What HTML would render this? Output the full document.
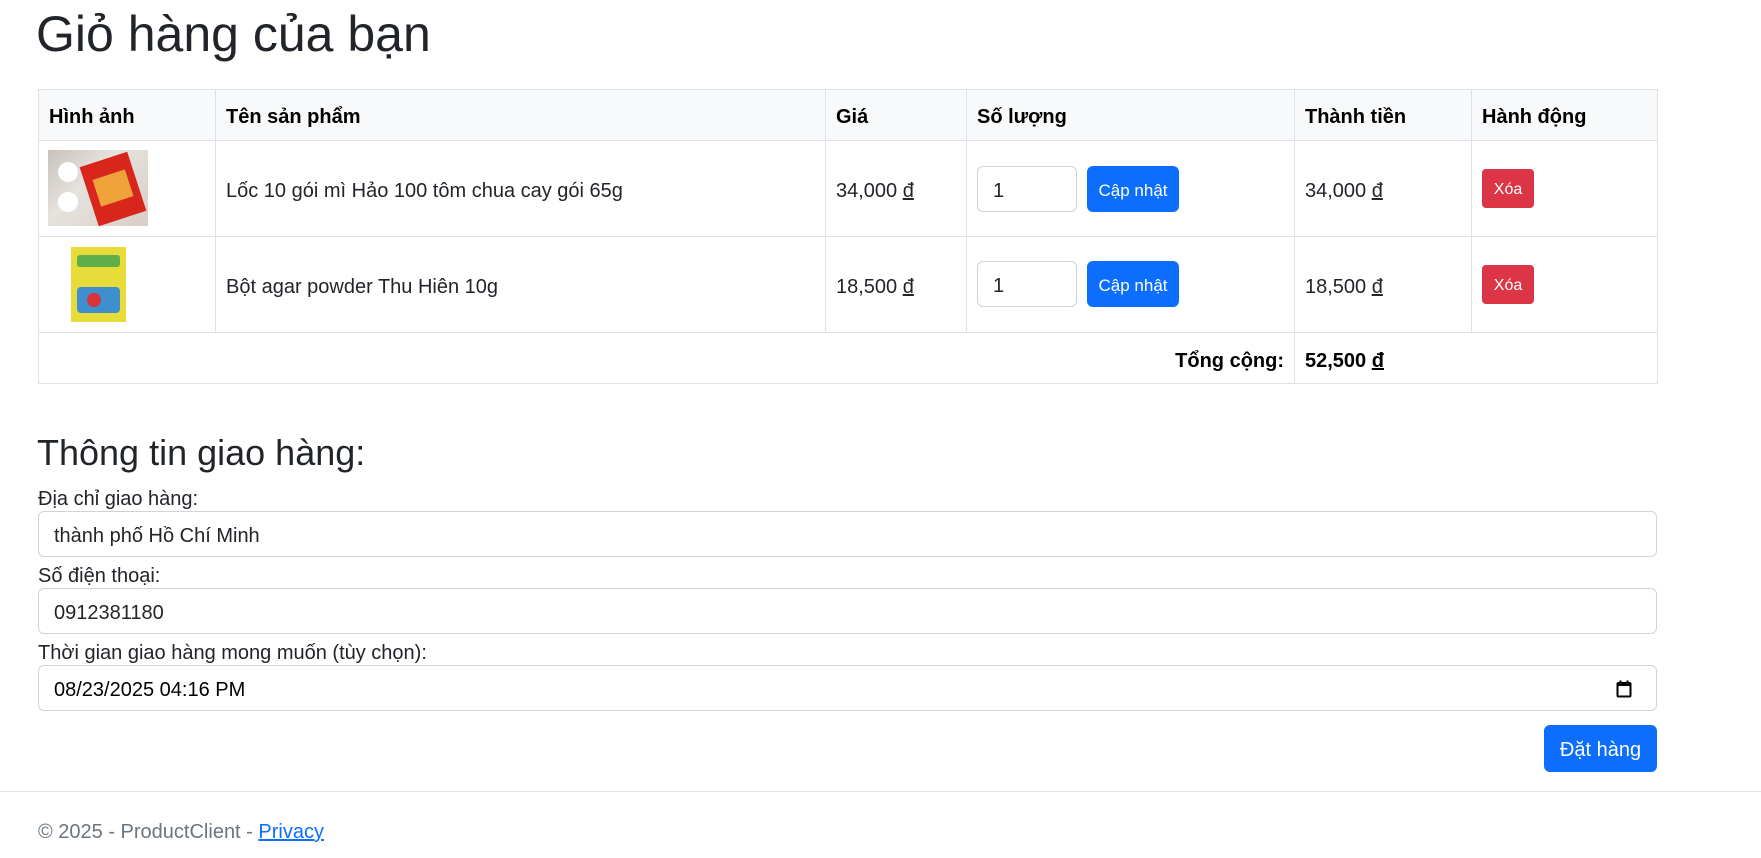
<!DOCTYPE html>
<html><head><meta charset="utf-8"><style>
*{box-sizing:border-box;margin:0;padding:0}
body{width:1761px;height:858px;position:relative;background:#fff;font-family:"Liberation Sans",sans-serif;color:#212529;font-size:20px;overflow:hidden}
.a{position:absolute}
.h{font-weight:bold;color:#000}
.ln{position:absolute;background:#dee2e6}
.inp{position:absolute;border:1px solid #ced4da;border-radius:6px;background:#fff;padding-left:15px;padding-top:4px;display:flex;align-items:center;font-size:20px;color:#212529}
.btn{position:absolute;background:#0d6efd;color:#fff;border-radius:6px;display:flex;align-items:center;justify-content:center;padding-top:3px}
.del{position:absolute;background:#dc3545;color:#fff;border-radius:4px;display:flex;align-items:center;justify-content:center;font-size:16px;padding-top:3px}
.t{position:absolute;line-height:24px}
u{text-decoration:underline}
</style></head><body>
<div class="a" style="left:36px;top:4px;font-size:50px;line-height:60px;color:#212529">Giỏ hàng của bạn</div>

<div class="a" style="left:38px;top:89px;width:1619px;height:51px;background:#f8f9fa"></div>
<div class="a" style="left:38px;top:89px;width:1620px;height:295px;border:1px solid #dee2e6"></div>
<div class="ln" style="left:38px;top:140px;width:1619px;height:1px"></div>
<div class="ln" style="left:38px;top:236px;width:1619px;height:1px"></div>
<div class="ln" style="left:38px;top:332px;width:1619px;height:1px"></div>
<div class="ln" style="left:215px;top:89px;width:1px;height:243px"></div>
<div class="ln" style="left:825px;top:89px;width:1px;height:243px"></div>
<div class="ln" style="left:966px;top:89px;width:1px;height:243px"></div>
<div class="ln" style="left:1294px;top:89px;width:1px;height:295px"></div>
<div class="ln" style="left:1471px;top:89px;width:1px;height:243px"></div>

<div class="t h" style="left:49px;top:105px">Hình ảnh</div>
<div class="t h" style="left:226px;top:105px">Tên sản phẩm</div>
<div class="t h" style="left:836px;top:105px">Giá</div>
<div class="t h" style="left:977px;top:105px">Số lượng</div>
<div class="t h" style="left:1305px;top:105px">Thành tiền</div>
<div class="t h" style="left:1482px;top:105px">Hành động</div>

<div class="a" style="left:48px;top:150px;width:100px;height:76px;background:linear-gradient(135deg,#c9c2bb 0%,#e6e2de 40%,#d7cfc6 100%)">
 <div class="a" style="left:40px;top:8px;width:50px;height:62px;background:#d8261c;transform:rotate(-18deg)"></div>
 <div class="a" style="left:48px;top:24px;width:34px;height:28px;background:#f0a23a;transform:rotate(-18deg)"></div>
 <div class="a" style="left:10px;top:12px;width:20px;height:20px;border-radius:50%;background:#fff"></div>
 <div class="a" style="left:10px;top:42px;width:20px;height:20px;border-radius:50%;background:#fff"></div>
</div>
<div class="t" style="left:226px;top:179px">Lốc 10 gói mì Hảo 100 tôm chua cay gói 65g</div>
<div class="t" style="left:836px;top:179px">34,000 <u>đ</u></div>
<div class="inp" style="left:977px;top:166px;width:100px;height:46px">1</div>
<div class="btn" style="left:1087px;top:166px;width:92px;height:46px;font-size:17px">Cập nhật</div>
<div class="t" style="left:1305px;top:179px">34,000 <u>đ</u></div>
<div class="del" style="left:1482px;top:169px;width:52px;height:39px">Xóa</div>

<div class="a" style="left:71px;top:247px;width:55px;height:75px;background:#e8dc3a">
 <div class="a" style="left:6px;top:8px;width:43px;height:12px;background:#5fae4a;border-radius:3px"></div>
 <div class="a" style="left:6px;top:40px;width:43px;height:26px;background:#3f8fcf;border-radius:4px"></div>
 <div class="a" style="left:16px;top:46px;width:14px;height:14px;background:#d9333a;border-radius:50%"></div>
</div>
<div class="t" style="left:226px;top:275px">Bột agar powder Thu Hiên 10g</div>
<div class="t" style="left:836px;top:275px">18,500 <u>đ</u></div>
<div class="inp" style="left:977px;top:261px;width:100px;height:46px">1</div>
<div class="btn" style="left:1087px;top:261px;width:92px;height:46px;font-size:17px">Cập nhật</div>
<div class="t" style="left:1305px;top:275px">18,500 <u>đ</u></div>
<div class="del" style="left:1482px;top:265px;width:52px;height:39px">Xóa</div>

<div class="t h" style="left:1000px;top:349px;width:284px;text-align:right">Tổng cộng:</div>
<div class="t h" style="left:1305px;top:349px">52,500 <u>đ</u></div>

<div class="a" style="left:37px;top:433px;font-size:36px;line-height:40px;color:#212529">Thông tin giao hàng:</div>
<div class="t" style="left:38px;top:487px">Địa chỉ giao hàng:</div>
<div class="inp" style="left:38px;top:511px;width:1619px;height:46px">thành phố Hồ Chí Minh</div>
<div class="t" style="left:38px;top:564px">Số điện thoại:</div>
<div class="inp" style="left:38px;top:588px;width:1619px;height:46px">0912381180</div>
<div class="t" style="left:38px;top:641px">Thời gian giao hàng mong muốn (tùy chọn):</div>
<div class="inp" style="left:38px;top:665px;width:1619px;height:46px;color:#000">08/23/2025 04:16 PM
 <svg class="a" style="right:24px;top:14px" width="16" height="18" viewBox="0 0 16 18"><rect x="1.5" y="3" width="13" height="13.5" rx="1" fill="none" stroke="#000" stroke-width="2"/><rect x="1.5" y="3" width="13" height="3" fill="#000"/><rect x="3.5" y="0.5" width="2" height="3" fill="#000"/><rect x="10.5" y="0.5" width="2" height="3" fill="#000"/></svg>
</div>
<div class="btn" style="left:1544px;top:725px;width:113px;height:47px;font-size:20px">Đặt hàng</div>

<div class="ln" style="left:0;top:791px;width:1761px;height:1px"></div>
<div class="t" style="left:38px;top:820px;color:#6c757d">© 2025 - ProductClient - <span style="color:#0d6efd;text-decoration:underline">Privacy</span></div>
</body></html>
